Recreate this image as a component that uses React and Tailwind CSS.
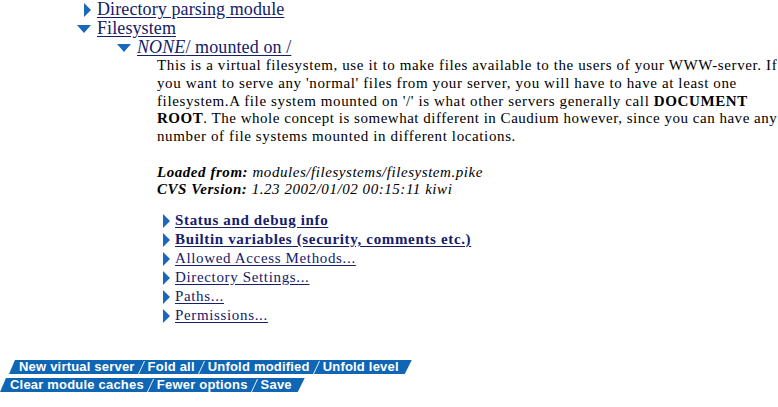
import React from "react";

const navy = "text-[#14206a]";

function RightArrow({ className = "" }) {
  return (
    <svg className={className} width="7" height="14" viewBox="0 0 7 14">
      <polygon points="0,0 7,7 0,14" fill="#1a68bb" />
    </svg>
  );
}

function DownArrow({ className = "" }) {
  return (
    <svg className={className} width="14" height="8" viewBox="0 0 14 8">
      <polygon points="0,0 14,0 7,8" fill="#1a68bb" />
    </svg>
  );
}

function ButtonBar({ items, className = "" }) {
  return (
    <div
      className={"flex h-[14px] items-center bg-[#0f66b4] pl-[10px] pr-[13px] " + className}
      style={{ clipPath: "polygon(6px 0, 100% 0, calc(100% - 7px) 100%, 0 100%)" }}
    >
      {items.map((label, i) => (
        <React.Fragment key={label}>
          {i > 0 && <span className="mx-[6px] h-[13px] w-px -skew-x-[25deg] bg-white/90" />}
          <a className="font-['Liberation_Sans',Arial,sans-serif] text-[13px] font-bold leading-[14px] tracking-[0.2px] text-white">{label}</a>
        </React.Fragment>
      ))}
    </div>
  );
}

const links = [
  { label: "Status and debug info", bold: true },
  { label: "Builtin variables (security, comments etc.)", bold: true },
  { label: "Allowed Access Methods..." },
  { label: "Directory Settings..." },
  { label: "Paths..." },
  { label: "Permissions..." },
];

export default function App() {
  return (
    <div className="relative h-[407px] w-[778px] overflow-hidden bg-white font-['Liberation_Serif','Times_New_Roman',serif] text-black">
      <div className="flex items-center gap-[6px] pl-[84px] leading-[19px]">
        <RightArrow />
        <a className={`text-[18px] tracking-[0.1px] underline underline-offset-2 ${navy}`}>Directory parsing module</a>
      </div>
      <div className="flex items-center gap-[6px] pl-[77px] leading-[19px]">
        <DownArrow />
        <a className={`text-[18px] tracking-[0.1px] underline underline-offset-2 ${navy}`}>Filesystem</a>
      </div>
      <div className="flex items-center gap-[6px] pl-[117px] leading-[19px]">
        <DownArrow />
        <a className={`text-[18px] tracking-[0.1px] underline underline-offset-2 ${navy}`}>
          <i>NONE</i>/ mounted on /
        </a>
      </div>

      <div className="pl-[157px] text-[15px] leading-[17.75px] tracking-[0.62px]">
        <p className="whitespace-nowrap">
          This is a virtual filesystem, use it to make files available to the users of your WWW-server. If
          <br />
          you want to serve any 'normal' files from your server, you will have to have at least one
          <br />
          filesystem.A file system mounted on '/' is what other servers generally call <b>DOCUMENT</b>
          <br />
          <span className="tracking-[0.52px]">
            <b>ROOT</b>. The whole concept is somewhat different in Caudium however, since you can have any
          </span>
          <br />
          number of file systems mounted in different locations.
        </p>
        <p className="mt-[17.75px] tracking-[0.55px]">
          <b><i>Loaded from:</i></b> <i>modules/filesystems/filesystem.pike</i>
          <br />
          <b><i>CVS Version:</i></b> <i>1.23 2002/01/02 00:15:11 kiwi</i>
        </p>

        <ul className="mt-[12px] pl-[6px] tracking-[0.65px]">
          {links.map((l) => (
            <li key={l.label} className="flex h-[19px] items-center gap-[5px]">
              <RightArrow />
              <a className={`text-[15px] underline underline-offset-2 ${navy} ${l.bold ? "font-bold" : ""}`}>{l.label}</a>
            </li>
          ))}
        </ul>
      </div>

      <div className="mt-[35px] flex flex-col items-start gap-[4px]">
        <ButtonBar className="ml-[9px]" items={["New virtual server", "Fold all", "Unfold modified", "Unfold level"]} />
        <ButtonBar items={["Clear module caches", "Fewer options", "Save"]} />
      </div>
    </div>
  );
}
